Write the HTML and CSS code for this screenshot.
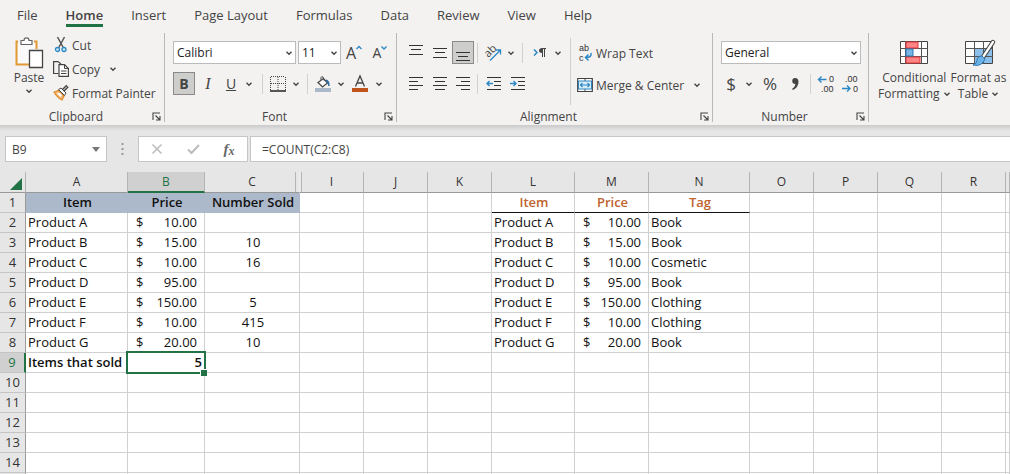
FILE: index.html
```html
<!DOCTYPE html>
<html lang="en">
<head>
<meta charset="utf-8">
<title>Product sales workbook</title>
<link rel="stylesheet" href="styles.css">
</head>
<body>
<svg class="defs" aria-hidden="true">
  <symbol id="chev" viewBox="0 0 8 8"><path d="M1.5 2.8 4 5.2 6.500 2.800" fill="none" stroke="#444" stroke-width="1.4"/></symbol>
  <symbol id="launch" viewBox="0 0 9 9"><path d="M1 8V1H8M3.500 3.500 7.500 7.500M8 4V8H4" fill="none" stroke="#444" stroke-width="1.1"/></symbol>
</svg>
<div class="app">
  <header class="ribbon">
    <nav class="tabs">
      <a href="#file">File</a>
      <a href="#home" class="current">Home</a>
      <a href="#insert">Insert</a>
      <a href="#layout">Page Layout</a>
      <a href="#formulas">Formulas</a>
      <a href="#data">Data</a>
      <a href="#review">Review</a>
      <a href="#view">View</a>
      <a href="#help">Help</a>
    </nav>
    <div class="groups">
      <section class="group clipboard">
        <div class="tools">
          <button class="big paste">
            <svg width="30" height="32" viewBox="0 0 30 32"><path d="M4 4.500H2.500V27.500H15M20 4.500H22.500V12" fill="none" stroke="#e39a35" stroke-width="2"/><path d="M4 6H21V12H15V26H4Z" fill="#fafafa"/><path d="M7 7.500V3.500H10Q10 .8 12.500 .8T15 3.500H18V7.500Z" fill="#fff" stroke="#666" stroke-width="1.200"/><path d="M15.500 13.500H28.500V30.500H15.500Z" fill="#fff" stroke="#444" stroke-width="1.300"/></svg>
            <span>Paste</span>
            <svg width="8" height="8"><use href="#chev"/></svg>
          </button>
          <div class="stack">
            <button class="cmd"><svg width="16" height="16" viewBox="0 0 16 16"><path d="M4.500 0 10.500 11M11.500 0 5.500 11" fill="none" stroke="#555" stroke-width="1.500"/><circle cx="4.500" cy="12.500" r="2" fill="#cfe6f5" stroke="#2b88c4" stroke-width="1.300"/><circle cx="11" cy="12.500" r="2" fill="#cfe6f5" stroke="#2b88c4" stroke-width="1.300"/></svg>Cut</button>
            <button class="cmd"><svg width="16" height="16" viewBox="0 0 16 16"><path d="M5.500 12.500H.600V.600H5L8 3" fill="none" stroke="#444" stroke-width="1.200"/><path d="M6 3.600H11.500L15.400 7.500V15.400H6Z" fill="#fff" stroke="#444" stroke-width="1.200"/><path d="M11.500 3.600V7.500H15.400M8 10H13.500M8 12.500H13.500" fill="none" stroke="#444"/></svg>Copy<svg class="far" width="8" height="8"><use href="#chev"/></svg></button>
            <button class="cmd"><svg width="16" height="16" viewBox="0 0 16 16"><path d="M1 7 5.500 5.500 11 11 9 15Q4 12.500 1 7Z" fill="#f6b873" stroke="#dd8b2a" stroke-width="1.200"/><path d="M4 8.500 6.500 7.500 9 10 7.500 12Z" fill="#fff"/><path d="M5.500 4.500 8 3 13 8 11.500 10.500Z" fill="#fff" stroke="#444"/><path d="M10 5.500 14.500 1" stroke="#444" stroke-width="3.500"/><path d="M10.500 5 14 1.500" stroke="#eee" stroke-width="1"/></svg>Format Painter</button>
          </div>
        </div>
        <footer><span>Clipboard</span><button aria-label="Clipboard options"><svg width="9" height="9"><use href="#launch"/></svg></button></footer>
      </section>

      <section class="group font">
        <div class="tools rows">
          <div class="row">
            <label class="combo wide"><select aria-label="Font"><option>Calibri</option></select><svg width="8" height="8"><use href="#chev"/></svg></label>
            <label class="combo size"><select aria-label="Font size"><option>11</option></select><svg width="8" height="8"><use href="#chev"/></svg></label>
            <button class="tool w26 grow" aria-label="Increase font size"><span class="glyph">A</span><svg width="6" height="18" viewBox="0 0 6 18"><path d="M.500 5 3 2.500 5.500 5" fill="none" stroke="#2b88c4" stroke-width="1.300"/></svg></button>
            <button class="tool w26 shrink" aria-label="Decrease font size"><span class="glyph">A</span><svg width="6" height="18" viewBox="0 0 6 18"><path d="M.500 2.500 3 5 5.500 2.500" fill="none" stroke="#2b88c4" stroke-width="1.300"/></svg></button>
          </div>
          <div class="row">
            <button class="tool w22 on"><b>B</b></button>
            <button class="tool w26"><i>I</i></button>
            <button class="tool w20"><u>U</u></button>
            <button class="tool w16" aria-label="Underline styles"><svg width="8" height="8"><use href="#chev"/></svg></button>
            <span class="rule"></span>
            <button class="tool w20" aria-label="Borders"><svg width="16" height="16" viewBox="0 0 16 16"><path d="M1 .500H15M.500 1V14M15.500 1V14M8 1V14M1 7.500H15" fill="none" stroke="#444" stroke-dasharray="1 1"/><path d="M0 15H16" stroke="#222" stroke-width="1.500"/></svg></button>
            <button class="tool w16" aria-label="Border styles"><svg width="8" height="8"><use href="#chev"/></svg></button>
            <span class="rule near"></span>
            <button class="tool w24" aria-label="Fill color"><svg width="16" height="18" viewBox="0 0 16 18"><path d="M3 7.500 8.500 3.500 12.500 8 7.500 12Z" fill="#fff" stroke="#444" stroke-width="1.200"/><path d="M6 5V2.500Q6.500 1 8 2L9.500 6" fill="none" stroke="#444"/><path d="M11 5Q14.500 5 14 11Q12.500 7 11 5Z" fill="#2f6da5" stroke="#2f6da5"/><path d="M0 13H16V17H0Z" fill="#acb9ca"/></svg></button>
            <button class="tool w12" aria-label="Fill colors"><svg width="8" height="8"><use href="#chev"/></svg></button>
            <button class="tool w26" aria-label="Font color"><svg width="16" height="18" viewBox="0 0 16 18"><path d="M3.500 11.500 8 1 12.500 11.500M5 8H11" fill="none" stroke="#444" stroke-width="1.300"/><path d="M0 13H16V17H0Z" fill="#c0541a"/></svg></button>
            <button class="tool w12" aria-label="Font colors"><svg width="8" height="8"><use href="#chev"/></svg></button>
          </div>
        </div>
        <footer><span>Font</span><button aria-label="Font options"><svg width="9" height="9"><use href="#launch"/></svg></button></footer>
      </section>

      <section class="group alignment">
        <div class="tools">
          <div class="rows">
            <div class="row">
              <button class="tool w24" aria-label="Top align"><svg width="14" height="22" viewBox="0 0 14 22"><path d="M0 3.500H14M2 7.500H12M0 12.500H14" stroke="#333" stroke-width="1.200"/></svg></button>
              <button class="tool w24" aria-label="Middle align"><svg width="14" height="22" viewBox="0 0 14 22"><path d="M0 6.500H14M2 10.500H12M0 15.500H14" stroke="#333" stroke-width="1.200"/></svg></button>
              <button class="tool w22 on" aria-label="Bottom align"><svg width="14" height="22" viewBox="0 0 14 22"><path d="M0 10.500H14M2 14.500H12M0 18.500H14" stroke="#333" stroke-width="1.200"/></svg></button>
              <span class="rule near"></span>
              <button class="tool w24" aria-label="Orientation"><svg width="18" height="18" viewBox="0 0 18 18"><text x="1" y="12" font-size="11" fill="#444" transform="rotate(-45 5 9)">ab</text><path d="M6 16.500 16 6.500M12 6H16.500V10.500" fill="none" stroke="#2b88c4" stroke-width="1.300"/></svg></button>
              <button class="tool w12" aria-label="Orientations"><svg width="8" height="8"><use href="#chev"/></svg></button>
              <span class="rule"></span>
              <button class="tool w24" aria-label="Text direction"><svg width="14" height="14" viewBox="0 0 14 14"><path d="M1 3.500 4 6.500 1 9.500" fill="none" stroke="#2b88c4" stroke-width="1.500"/><path d="M9.500 11V3M11.500 11V3M13 2.500H8.500" fill="none" stroke="#444"/><path d="M9.500 2Q6 2 6 4.500T9.500 7Z" fill="#444"/></svg></button>
              <button class="tool w12" aria-label="Text directions"><svg width="8" height="8"><use href="#chev"/></svg></button>
            </div>
            <div class="row">
              <button class="tool w24" aria-label="Align left"><svg width="14" height="15" viewBox="0 0 14 15"><path d="M0 1.500H14M0 5.500H9M0 9.500H14M0 13.500H9" stroke="#333" stroke-width="1.200"/></svg></button>
              <button class="tool w24" aria-label="Center"><svg width="14" height="15" viewBox="0 0 14 15"><path d="M0 1.500H14M2 5.500H12M0 9.500H14M2 13.500H12" stroke="#333" stroke-width="1.200"/></svg></button>
              <button class="tool w22" aria-label="Align right"><svg width="14" height="15" viewBox="0 0 14 15"><path d="M0 1.500H14M5 5.500H14M0 9.500H14M5 13.500H14" stroke="#333" stroke-width="1.200"/></svg></button>
              <span class="rule near"></span>
              <button class="tool w24" aria-label="Decrease indent"><svg width="15" height="15" viewBox="0 0 15 15"><path d="M1 1.500H15M8 5.500H15M8 9.500H15M1 13.500H15" stroke="#333" stroke-width="1.200"/><path d="M7 7.500H1M3.500 5 1 7.500 3.500 10" fill="none" stroke="#2b88c4" stroke-width="1.400"/></svg></button>
              <button class="tool w24" aria-label="Increase indent"><svg width="15" height="15" viewBox="0 0 15 15"><path d="M1 1.500H15M8 5.500H15M8 9.500H15M1 13.500H15" stroke="#333" stroke-width="1.200"/><path d="M0 7.500H6M3.500 5 6 7.500 3.500 10" fill="none" stroke="#2b88c4" stroke-width="1.400"/></svg></button>
            </div>
          </div>
          <div class="rows wrap">
            <button class="cmd"><svg class="tiny" width="16" height="16" viewBox="0 0 16 16"><text x="2" y="6">ab</text><text x="2" y="16">c</text><path d="M14 8Q15 12.500 9 12.500M11.500 9.500 8.500 12.500 11.500 15.500" fill="none" stroke="#2b88c4" stroke-width="1.500"/></svg>Wrap Text</button>
            <button class="cmd"><svg width="16" height="16" viewBox="0 0 16 16"><path d="M.700 1.500H15.300V14.500H.700Z" fill="#fff" stroke="#444" stroke-width="1.200"/><path d="M8 1.500V4M8 12V14.500" stroke="#444"/><path d="M1.500 4H14.500V12H1.500Z" fill="#d9edf8" stroke="#2b88c4"/><path d="M3.500 8H12.500M5.500 6 3.500 8 5.500 10M10.500 6 12.500 8 10.500 10" fill="none" stroke="#2b88c4" stroke-width="1.200"/></svg>Merge &amp; Center<svg class="far" width="8" height="8"><use href="#chev"/></svg></button>
          </div>
        </div>
        <footer><span>Alignment</span><button aria-label="Alignment options"><svg width="9" height="9"><use href="#launch"/></svg></button></footer>
      </section>

      <section class="group number">
        <div class="tools rows">
          <div class="row">
            <label class="combo full"><select aria-label="Number format"><option>General</option></select><svg width="8" height="8"><use href="#chev"/></svg></label>
          </div>
          <div class="row">
            <button class="tool w20 sign">$</button>
            <button class="tool w16" aria-label="Currencies"><svg width="8" height="8"><use href="#chev"/></svg></button>
            <button class="tool w26 sign">%</button>
            <button class="tool w24" aria-label="Comma style"><svg width="10" height="14" viewBox="0 0 10 14"><path d="M5 1A3 3 0 1 0 5.500 7Q5 10 2 12L3 13Q8.500 10 8.500 5 8.500 1 5 1Z" fill="#444"/></svg></button>
            <span class="rule near"></span>
            <button class="tool w24" aria-label="Increase decimal"><svg class="tiny" width="18" height="18" viewBox="0 0 18 18"><text x="12" y="7">0</text><text x="4" y="17">.00</text><path d="M9.500 4.500H1.500M4.500 1.500 1.500 4.500 4.500 7.500" fill="none" stroke="#2b88c4" stroke-width="1.400"/></svg></button>
            <button class="tool w24" aria-label="Decrease decimal"><svg class="tiny" width="18" height="18" viewBox="0 0 18 18"><text x="4" y="7">.00</text><text x="12" y="17">0</text><path d="M1 13.500H9M6 10.500 9 13.500 6 16.500" fill="none" stroke="#2b88c4" stroke-width="1.400"/></svg></button>
          </div>
        </div>
        <footer><span>Number</span><button aria-label="Number options"><svg width="9" height="9"><use href="#launch"/></svg></button></footer>
      </section>

      <section class="group styles">
        <div class="tools">
          <button class="big"><svg width="30" height="32" viewBox="0 0 30 32"><path d="M1.500 7.500H28.500V29.500H1.500Z" fill="#fff" stroke="#444"/><path d="M1 14.500H29M1 22.500H29M6.500 7V30M22.500 7V30" stroke="#555"/><path d="M7 8H19V14H7ZM7 23H21V29H7Z" fill="#ff8585" stroke="#e0343c"/><path d="M7 15H14V22H7Z" fill="#78b4e4" stroke="#2b78b4"/></svg><span>Conditional</span><span>Formatting <svg width="8" height="8"><use href="#chev"/></svg></span></button>
          <button class="big"><svg width="30" height="32" viewBox="0 0 30 32"><path d="M1.500 7.500H28.500V29.500H1.500Z" fill="#fff" stroke="#444"/><path d="M11 15H28V29H11Z" fill="#8cc0ea"/><path d="M1 14.500H29M1 22.500H29M10.500 7V30M19.500 7V30" stroke="#555"/><path d="M29 8 19 23" stroke="#444" stroke-width="4.500" stroke-linecap="round"/><path d="M29 8 19 23" stroke="#fff" stroke-width="2.300" stroke-linecap="round"/><path d="M18 22Q13 22 13 26.500 13 29.500 9 31 18 33 21 25Z" fill="#6db2e6" stroke="#2b78b4"/></svg><span>Format as</span><span>Table <svg width="8" height="8"><use href="#chev"/></svg></span></button>
        </div>
      </section>
    </div>
  </header>

  <div class="formula-bar">
    <div class="name-box"><input aria-label="Name box" value="B9"><button aria-label="Named ranges"><svg width="8" height="5" viewBox="0 0 8 5"><path d="M0 0H8L4 5Z" fill="#777"/></svg></button></div>
    <svg class="grip" width="3" height="12" viewBox="0 0 3 12"><path d="M.500 1H2.500M.500 6H2.500M.500 11H2.500" stroke="#999" stroke-width="2"/></svg>
    <div class="entry">
      <button aria-label="Cancel"><svg width="12" height="12" viewBox="0 0 12 12"><path d="M1.500 1.500 10.500 10.500M10.500 1.500 1.500 10.500" stroke="#bbb" stroke-width="1.500"/></svg></button>
      <button aria-label="Enter"><svg width="13" height="12" viewBox="0 0 13 12"><path d="M1 6.500 4.500 10 12 2" fill="none" stroke="#bbb" stroke-width="2"/></svg></button>
      <button class="fx" aria-label="Insert function">f<small>x</small></button>
    </div>
    <input class="formula" aria-label="Formula" value="=COUNT(C2:C8)">
  </div>

  <main class="sheet">
    <table>
      <colgroup><col class="c-head"><col class="c-a"><col class="c-b"><col class="c-c"><col class="c-std" span="3"><col class="c-l"><col class="c-m"><col class="c-n"><col class="c-std" span="4"><col></colgroup>
      <thead>
        <tr><th class="corner"><svg width="12" height="12" viewBox="0 0 12 12"><path d="M12 0V12H0Z" fill="#217346"/></svg></th><th>A</th><th class="active">B</th><th class="folded">C</th><th>I</th><th>J</th><th>K</th><th>L</th><th>M</th><th>N</th><th>O</th><th>P</th><th>Q</th><th>R</th><th></th></tr>
      </thead>
      <tbody>
        <tr><th>1<td class="head">Item<td class="head">Price<td class="head">Number Sold<td><td><td><td class="tag-head">Item<td class="tag-head">Price<td class="tag-head">Tag<td><td><td><td><td></tr>
        <tr><th>2<td>Product A<td class="money"><div>$<span>10.00</span></div><td class="num"><td><td><td><td>Product A<td class="money"><div>$<span>10.00</span></div><td>Book<td><td><td><td><td></tr>
        <tr><th>3<td>Product B<td class="money"><div>$<span>15.00</span></div><td class="num">10<td><td><td><td>Product B<td class="money"><div>$<span>15.00</span></div><td>Book<td><td><td><td><td></tr>
        <tr><th>4<td>Product C<td class="money"><div>$<span>10.00</span></div><td class="num">16<td><td><td><td>Product C<td class="money"><div>$<span>10.00</span></div><td>Cosmetic<td><td><td><td><td></tr>
        <tr><th>5<td>Product D<td class="money"><div>$<span>95.00</span></div><td class="num"><td><td><td><td>Product D<td class="money"><div>$<span>95.00</span></div><td>Book<td><td><td><td><td></tr>
        <tr><th>6<td>Product E<td class="money"><div>$<span>150.00</span></div><td class="num">5<td><td><td><td>Product E<td class="money"><div>$<span>150.00</span></div><td>Clothing<td><td><td><td><td></tr>
        <tr><th>7<td>Product F<td class="money"><div>$<span>10.00</span></div><td class="num">415<td><td><td><td>Product F<td class="money"><div>$<span>10.00</span></div><td>Clothing<td><td><td><td><td></tr>
        <tr><th>8<td>Product G<td class="money"><div>$<span>20.00</span></div><td class="num">10<td><td><td><td>Product G<td class="money"><div>$<span>20.00</span></div><td>Book<td><td><td><td><td></tr>
        <tr><th class="active">9<td class="total">Items that sold<td class="selected">5<td><td><td><td><td><td><td><td><td><td><td><td></tr>
        <tr><th>10<td><td><td><td><td><td><td><td><td><td><td><td><td><td></tr>
        <tr><th>11<td><td><td><td><td><td><td><td><td><td><td><td><td><td></tr>
        <tr><th>12<td><td><td><td><td><td><td><td><td><td><td><td><td><td></tr>
        <tr><th>13<td><td><td><td><td><td><td><td><td><td><td><td><td><td></tr>
        <tr><th>14<td><td><td><td><td><td><td><td><td><td><td><td><td><td></tr>
        <tr><th><td><td><td><td><td><td><td><td><td><td><td><td><td><td></tr>
      </tbody>
    </table>
  </main>
</div>
</body>
</html>
```

FILE: styles.css
```css
* { box-sizing: border-box; }
body {
  margin: 0;
  font-family: "Open Sans", "Noto Sans", sans-serif;
  font-size: 12px;
  color: #444;
  background: #e6e6e6;
}
button, input, select { font: inherit; color: inherit; margin: 0; padding: 0; border: 0; background: none; }
button { display: flex; align-items: center; justify-content: center; }
svg { flex: none; display: block; overflow: visible; }
.defs { position: absolute; width: 0; height: 0; }
.tiny text { font: 9px "Liberation Sans", sans-serif; fill: #333; }
.app { display: flex; flex-direction: column; height: 100vh; overflow: hidden; }

.ribbon { background: #f3f2f1; flex: none; }
.tabs { display: flex; gap: 28px; padding-left: 17px; height: 30px; font-size: 13px; }
.tabs a { color: #444; text-decoration: none; line-height: 16px; padding-top: 7px; height: 27px; }
.tabs .current { font-weight: 600; border-bottom: 3px solid #217346; }

.groups { display: flex; padding: 3px 0; }
.group { display: flex; flex-direction: column; height: 89px; border-right: 1px solid #b9b9b9; flex: none; }
.tools { display: flex; flex: 1; min-height: 0; }
.group footer { display: flex; align-items: center; height: 11px; line-height: 11px; padding-right: 3px; }
.group footer span { flex: 1; text-align: center; }
.clipboard { width: 165px; }
.font { width: 232px; }
.alignment { width: 316px; }
.number { width: 156px; }
.group.styles { border: 0; flex: 1; }

.big { flex-direction: column; line-height: 16px; justify-content: flex-start; }
.big span { display: flex; align-items: center; gap: 3px; white-space: nowrap; }
.paste { width: 58px; padding: 4px 0 0; gap: 1px; }
.styles .tools { padding-left: 9px; }
.styles .big { padding-top: 1px; }
.styles .big span:first-of-type { margin-top: 4px; }

.stack { display: flex; flex-direction: column; flex: 1; align-items: flex-start; margin-left: -5px; }
.cmd { gap: 3px; height: 24px; white-space: nowrap; }
.far { margin-left: 6px; }

.rows { display: flex; flex-direction: column; gap: 8px; padding: 8px 0 0 8px; }
.row { display: flex; align-items: center; height: 23px; }
.combo { display: grid; align-items: center; height: 23px; background: #fff; border: 1px solid #bbb; }
.combo select { appearance: none; grid-area: 1 / 1; width: 100%; padding-left: 3px; color: #222; }
.combo svg { grid-area: 1 / 1; justify-self: end; margin-right: 2px; pointer-events: none; }
.wide { width: 123px; margin-right: 2px; }
.size { width: 43px; }
.full { width: 140px; }
.tool { height: 23px; flex: none; }
.w12 { width: 12px; }
.w16 { width: 16px; }
.w20 { width: 20px; }
.w22 { width: 22px; }
.w24 { width: 24px; }
.w26 { width: 26px; }
.on { background: #cdcdcb; border: 1px solid #8a8a8a; }
.tool b, .tool i, .tool u { font-size: 14px; }
.tool i { font-family: "Liberation Serif", serif; font-size: 16px; }
.glyph { font-size: 16px; line-height: 20px; }
.shrink .glyph { font-size: 14px; }
.rule { width: 1px; height: 20px; background: #d0d0d0; margin: 0 5px; flex: none; }
.near { margin: 0 3px; }
.sign { font-size: 17px; }
.alignment .rows { padding-left: 7px; }
.alignment .wrap { border-left: 1px solid #d0d0d0; margin: 5px 0 6px 6px; padding: 3px 0 0 6px; align-items: flex-start; }

.formula-bar {
  display: flex;
  flex: none;
  height: 47px;
  padding: 11px 0 10px 5px;
  background: linear-gradient(#cbcbcb, #e6e6e6 6px);
}
.name-box { display: flex; width: 102px; background: #fff; border: 1px solid #c6c6c6; }
.name-box input { flex: 1; min-width: 0; padding-left: 6px; }
.name-box button { width: 20px; }
.grip { margin: 7px 14px 0 14px; }
.entry { display: flex; width: 110px; margin-right: 2px; background: #fff; border: 1px solid #c6c6c6; }
.entry button { flex: 1; }
.fx { font: italic bold 15px "Liberation Serif", serif; color: #666; }
.fx small { font-size: 12px; line-height: 8px; align-self: center; padding-top: 3px; }
.formula { flex: 1; min-width: 0; background: #fff; border: 1px solid #c6c6c6; border-right: 0; padding-left: 11px; }

.sheet { flex: 1; min-height: 0; overflow: hidden; background: #fff; font-size: 13px; color: #111; }
.sheet table { width: 100%; table-layout: fixed; border-collapse: separate; border-spacing: 0; }
.c-head { width: 26px; }
.c-a { width: 102px; }
.c-b { width: 77px; }
.c-c { width: 95px; }
.c-std { width: 64px; }
.c-l { width: 83px; }
.c-m { width: 74px; }
.c-n { width: 101px; }
.sheet th, .sheet td {
  height: 20px;
  line-height: 19px;
  padding: 0 0 0 2px;
  border-right: 1px solid #d0d0d0;
  border-bottom: 1px solid #d0d0d0;
  white-space: nowrap;
  overflow: visible;
}
.sheet th { background: #e6e6e6; font-weight: 400; font-size: 12px; color: #333; text-align: center; padding: 0; }
.sheet thead th { border-right-color: #b4b4b4; border-bottom-color: #999; height: 21px; line-height: 20px; }
.sheet tbody th { border-right-color: #999; border-bottom-color: #c4c4c4; font-size: 13px; }
.sheet .corner { border-right-color: #b4b4b4; }
.corner svg { margin: 3px 3px 0 auto; }
.sheet .active { background: #d0d0d0; color: #217346; }
.sheet thead .active { border-bottom: 2px solid #217346; line-height: 19px; }
.sheet tbody .active { border-right: 2px solid #217346; }
.sheet .folded { position: relative; border-right-color: #eee; }
.folded::after { content: ""; position: absolute; top: 0; bottom: 0; right: -3px; width: 5px; border: solid #b4b4b4; border-width: 0 1px; }
.sheet .head { background: #acb9ca; border-color: #acb9ca; font-weight: 600; text-align: center; }
.sheet .tag-head { color: #c0622d; font-weight: 600; text-align: center; border-bottom-color: #111; }
.sheet .num { text-align: center; }
.sheet .money { padding: 0 7px 0 8px; }
.money div { display: flex; justify-content: space-between; }
.sheet .total { font-weight: 600; }
.sheet .selected { position: relative; text-align: right; font-weight: 600; padding-right: 2px; }
.selected::before { content: ""; position: absolute; inset: -2px -2px -2px -2px; border: 2px solid #217346; }
.selected::after { content: ""; position: absolute; right: -3px; bottom: -4px; width: 6px; height: 6px; background: #217346; border: solid #fff; border-width: 1px 0 0 1px; }
```
